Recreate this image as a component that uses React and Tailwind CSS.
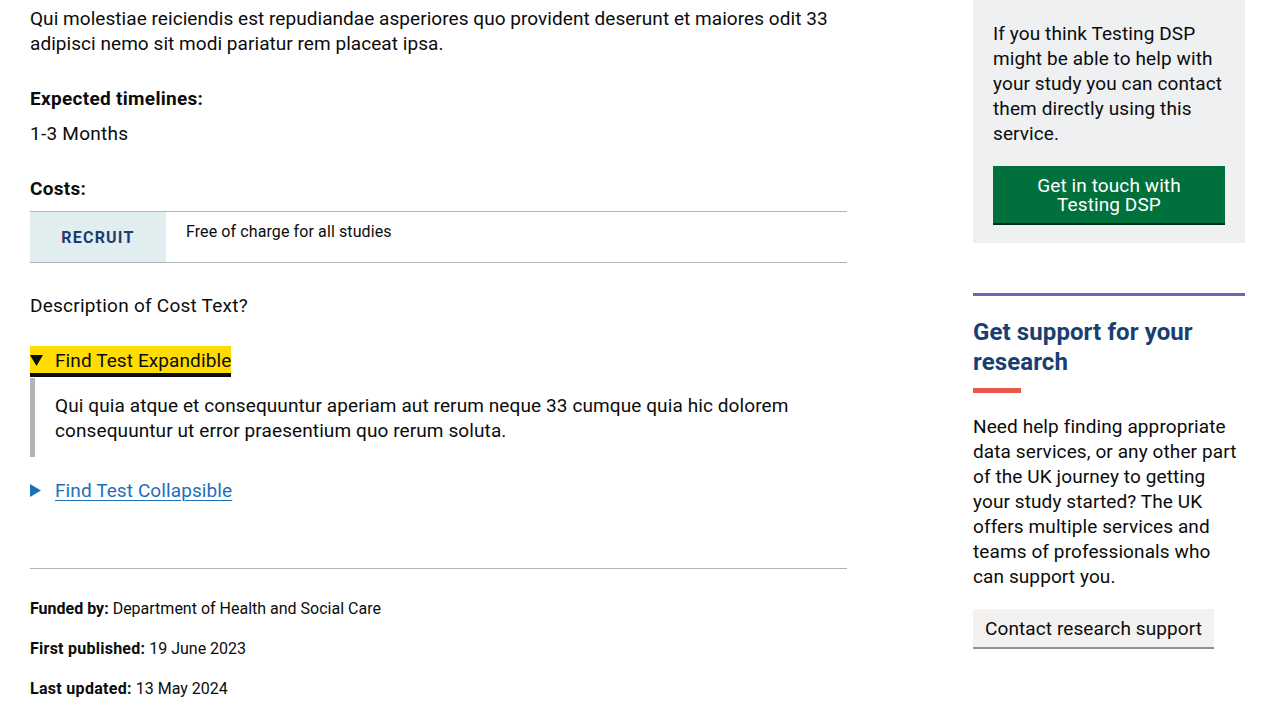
const Triangle = ({ dir = "down", className }) =>
  dir === "down" ? (
    <svg width="13" height="11" viewBox="0 0 13 11" className={className}>
      <polygon points="0,0 13,0 6.5,11" fill="currentColor" />
    </svg>
  ) : (
    <svg width="11" height="13" viewBox="0 0 11 13" className={className}>
      <polygon points="0,0 11,6.5 0,13" fill="currentColor" />
    </svg>
  );

export default function App() {
  return (
    <div
      className="min-h-[720px] bg-white text-[#0b0c0c] tracking-[0.1px]"
      style={{ fontFamily: "Roboto, 'Liberation Sans', sans-serif" }}
    >
      <div className="flex pl-[30px] pr-[35px]">
        {/* main column */}
        <main className="w-[817px] pt-[6px] text-[19px] leading-[25px]">
          <p className="tracking-[0.05px]">
            Qui molestiae reiciendis est repudiandae asperiores quo provident deserunt et maiores odit 33
            adipisci nemo sit modi pariatur rem placeat ipsa.
          </p>

          <h3 className="mt-[30px] font-bold tracking-[0.3px]">Expected timelines:</h3>
          <p className="mt-[10px] tracking-[0.25px]">1-3 Months</p>

          <h3 className="mt-[30px] font-bold tracking-[0.3px]">Costs:</h3>
          <div className="mt-[10px] flex h-[52px] border-y border-[#b1b4b6]">
            <div className="flex w-[136px] items-center justify-center bg-[#e1eef0] text-[16px] font-bold tracking-[1.2px] text-[#1d3d6e]">
              RECRUIT
            </div>
            <div className="pl-[20px] pt-[10px] text-[16px] leading-[20px]">Free of charge for all studies</div>
          </div>

          <p className="mt-[30px] tracking-[0.25px]">Description of Cost Text?</p>

          <div className="mt-[28px]">
            <div className="inline-flex items-center bg-[#ffdd00] pt-[2px] border-b-[4px] border-[#0b0c0c]">
              <Triangle className="mr-[12px] text-[#0b0c0c]" />
              <span>Find Test Expandible</span>
            </div>
            <div className="mt-[1px] border-l-[5px] border-[#b1b4b6] pl-[20px] pt-[15px] pb-[14px]">
              Qui quia atque et consequuntur aperiam aut rerum neque 33 cumque quia hic dolorem
              consequuntur ut error praesentium quo rerum soluta.
            </div>
          </div>

          <div className="mt-[21px] flex items-center text-[#1d70b8]">
            <Triangle dir="right" className="mr-[14px]" />
            <a href="#" className="underline decoration-1 underline-offset-[3px]">
              Find Test Collapsible
            </a>
          </div>

          <hr className="mt-[65px] border-t border-[#b1b4b6]" />

          <div className="mt-[30px] space-y-[20px] text-[16px] leading-[20px] tracking-normal">
            <p>
              <span className="font-bold">Funded by:</span> Department of Health and Social Care
            </p>
            <p>
              <span className="font-bold tracking-[0.25px]">First published:</span> 19 June 2023
            </p>
            <p>
              <span className="font-bold tracking-[0.3px]">Last updated:</span> 13 May 2024
            </p>
          </div>
        </main>

        {/* sidebar */}
        <aside className="ml-[126px] w-[272px] text-[19px] leading-[25px]">
          <div className="bg-[#eff0f2] px-[20px] pt-[21px] pb-[20px]">
            <p>
              If you think Testing DSP might be able to help with your study you can contact them
              directly using this service.
            </p>
            <button className="mt-[20px] w-full bg-[#00703c] pt-[10px] pb-[9px] text-[19px] leading-[19px] text-white shadow-[0_2px_0_#002d18]">
              Get in touch with
              <br />
              Testing DSP
            </button>
          </div>

          <div className="mt-[50px] h-[3px] bg-[#6b67b0]" />
          <h2 className="mt-[21px] text-[24px] font-bold leading-[30px] text-[#193e72]">
            Get support for your research
          </h2>
          <div className="mt-[11px] h-[5px] w-[48px] bg-[#e8594b]" />
          <p className="mt-[21px]">
            Need help finding appropriate data services, or any other part of the UK journey to getting
            your study started? The UK offers multiple services and teams of professionals who can
            support you.
          </p>
          <button className="mt-[20px] border-b-2 border-[#929191] bg-[#f3f2f1] px-[12px] pt-[7px] pb-[6px] text-[19px] leading-[25px] text-[#0b0c0c]">
            Contact research support
          </button>
        </aside>
      </div>
    </div>
  );
}
